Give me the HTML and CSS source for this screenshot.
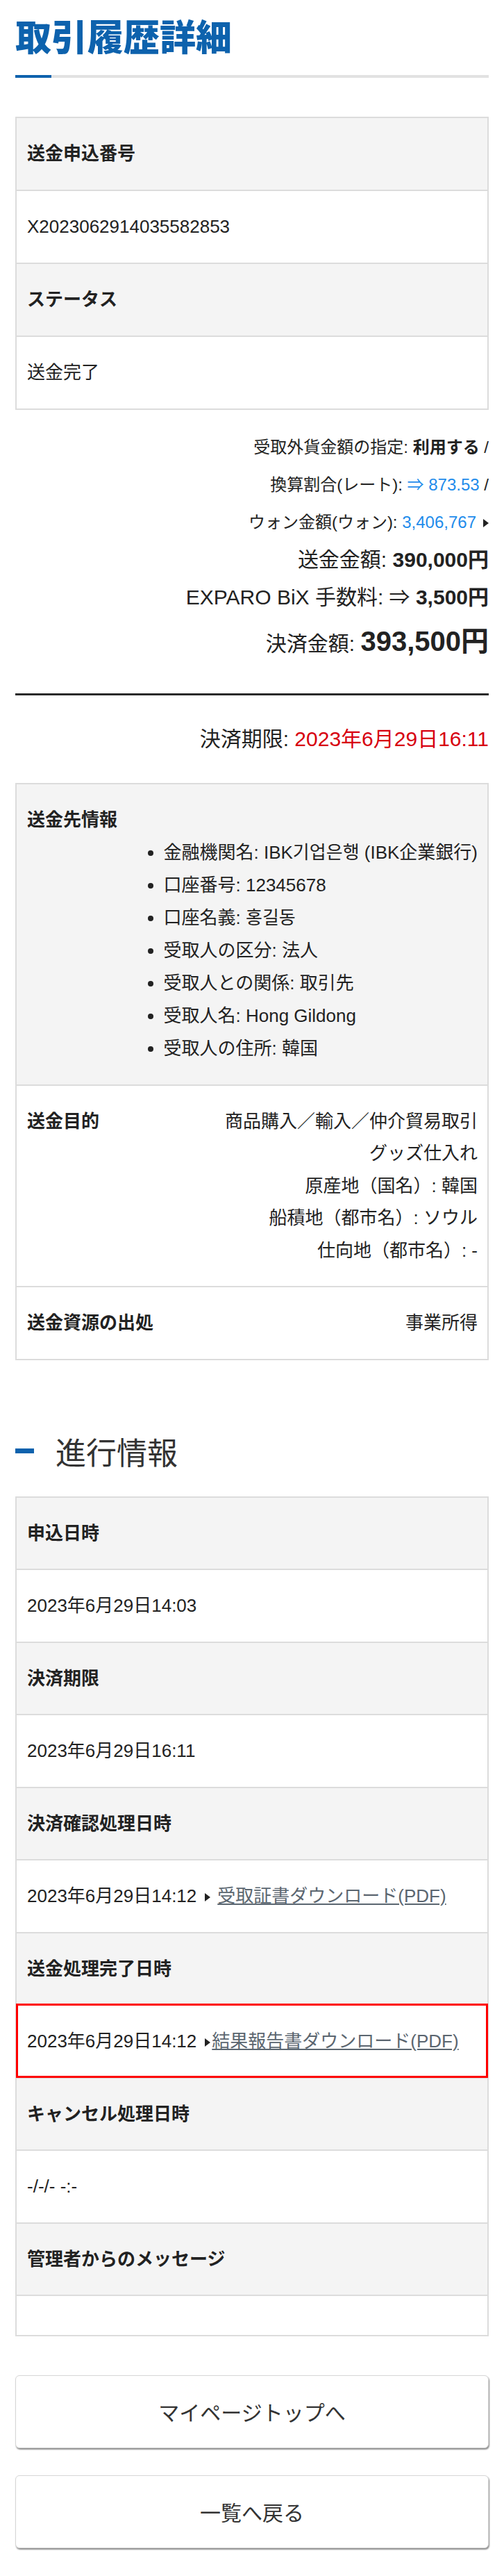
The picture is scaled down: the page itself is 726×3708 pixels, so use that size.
FILE: index.html
```html
<!DOCTYPE html>
<html lang="ja">
<head>
<meta charset="utf-8">
<title>取引履歴詳細</title>
<link rel="stylesheet" href="styles.css">
</head>
<body>
<main class="page">
  <h1 class="title">取引履歴詳細</h1>
  <div class="title-rule"></div>

  <div class="tbl first">
    <div class="row head">送金申込番号</div>
    <div class="row">X2023062914035582853</div>
    <div class="row head">ステータス</div>
    <div class="row">送金完了</div>
  </div>

  <div class="amounts">
    <div class="amt-s">受取外貨金額の指定: <b>利用する</b> /</div>
    <div class="amt-s">換算割合(レート): <span class="blue">⇒ 873.53</span> /</div>
    <div class="amt-s">ウォン金額(ウォン): <span class="blue">3,406,767</span><span class="tri tri-amt"></span></div>
    <div class="amt-m">送金金額: <b>390,000円</b></div>
    <div class="amt-m">EXPARO BiX 手数料: ⇒ <b>3,500円</b></div>
    <div class="amt-l">決済金額: <b>393,500円</b></div>
  </div>

  <div class="black-rule"></div>

  <div class="deadline">決済期限: <span class="red">2023年6月29日16:11</span></div>

  <div class="tbl second">
    <div class="row head multi">
      <div class="label line">送金先情報</div>
      <ul class="dest">
        <li>金融機関名: IBK기업은행 (IBK企業銀行)</li>
        <li>口座番号: 12345678</li>
        <li>口座名義: 홍길동</li>
        <li>受取人の区分: 法人</li>
        <li>受取人との関係: 取引先</li>
        <li>受取人名: Hong Gildong</li>
        <li>受取人の住所: 韓国</li>
      </ul>
    </div>
    <div class="row split multi">
      <div class="label line">送金目的</div>
      <div class="val">
        <div class="line">商品購入／輸入／仲介貿易取引</div>
        <div class="line">グッズ仕入れ</div>
        <div class="line">原産地（国名）: 韓国</div>
        <div class="line">船積地（都市名）: ソウル</div>
        <div class="line">仕向地（都市名）: -</div>
      </div>
    </div>
    <div class="row split">
      <div class="label">送金資源の出処</div>
      <div class="val">事業所得</div>
    </div>
  </div>

  <h2 class="sec">進行情報</h2>

  <div class="tbl">
    <div class="row head">申込日時</div>
    <div class="row">2023年6月29日14:03</div>
    <div class="row head">決済期限</div>
    <div class="row">2023年6月29日16:11</div>
    <div class="row head">決済確認処理日時</div>
    <div class="row">2023年6月29日14:12<span class="tri tri-a"></span><a class="link" href="#">受取証書ダウンロード(PDF)</a></div>
    <div class="row head">送金処理完了日時</div>
    <div class="row hl">2023年6月29日14:12<span class="tri tri-b"></span><a class="link" href="#">結果報告書ダウンロード(PDF)</a></div>
    <div class="row head">キャンセル処理日時</div>
    <div class="row">-/-/- -:-</div>
    <div class="row head">管理者からのメッセージ</div>
    <div class="row empty"></div>
  </div>

  <div class="btns">
    <a class="btn" href="#">マイページトップへ</a>
    <a class="btn" href="#">一覧へ戻る</a>
  </div>
</main>
</body>
</html>
```
FILE: styles.css
```css
html, body {
  margin: 0;
  padding: 0;
  background: #fff;
}

body {
  font-family: "Liberation Sans", "Noto Sans CJK JP", "Noto Sans CJK KR", sans-serif;
  color: #222;
}

.page {
  padding: 20px 22px 41px;
}

.title {
  margin: 0;
  height: 62px;
  font-family: "Noto Sans CJK JP", sans-serif;
  font-size: 52px;
  line-height: 62px;
  font-weight: 900;
  color: #0d62ad;
}

.title-rule {
  margin-top: 26px;
  height: 4px;
  background: linear-gradient(to right, #0d62ad 52px, #e2e2e2 52px);
}

.tbl {
  border: 2px solid #dcdcdc;
}

.tbl.first {
  margin-top: 56px;
}

.tbl.second {
  margin-top: 36px;
}

.row {
  height: 46.5px;
  padding: 28px 14px 28px 15px;
  font-size: 26px;
  line-height: 46.5px;
  border-top: 2px solid #dcdcdc;
  background: #fff;
  white-space: nowrap;
}

.tbl.first .row {
  height: 47px;
  line-height: 47px;
}

.row.multi {
  height: auto;
}

.row:first-child {
  border-top: 0;
}

.head {
  background: #f4f4f4;
  font-weight: 700;
}

.label {
  font-weight: 700;
}

.line {
  height: 46.5px;
}

.dest {
  margin: 0 0 0 auto;
  width: fit-content;
  padding-left: 40px;
  font-weight: 400;
  list-style: disc;
}

.dest li {
  height: 47px;
  line-height: 47px;
}

.split {
  display: flex;
  justify-content: space-between;
  align-items: flex-start;
}

.split .val {
  text-align: right;
}

.amounts {
  margin-top: 27px;
  text-align: right;
}

.amt-s {
  height: 54px;
  font-size: 24px;
  line-height: 54px;
}

.amt-m {
  height: 54px;
  font-size: 30px;
  line-height: 54px;
}

.amt-l {
  height: 72px;
  font-size: 30px;
  line-height: 72px;
}

.amt-l b {
  font-size: 40px;
}

.blue {
  color: #1f8ceb;
}

.red {
  color: #d7000f;
}

.tri {
  display: inline-block;
  width: 0;
  height: 0;
  border-left: 8px solid #222;
  border-top: 6px solid transparent;
  border-bottom: 6px solid transparent;
  vertical-align: 1px;
}

.tri-amt {
  margin-left: 10px;
  border-top-width: 6.5px;
  border-bottom-width: 6.5px;
}

.tri-a {
  margin: 0 10px 0 12px;
}

.tri-b {
  margin: 0 2px 0 12px;
}

.link {
  color: #5b6670;
  text-decoration: underline;
}

.black-rule {
  margin-top: 39px;
  height: 3px;
  background: #2a2a2a;
}

.deadline {
  height: 54px;
  margin-top: 36px;
  font-size: 30px;
  line-height: 54px;
  text-align: right;
}

.sec {
  display: flex;
  align-items: center;
  height: 64px;
  margin: 99px 0 33px;
  font-family: "Noto Sans CJK JP", sans-serif;
  font-size: 44px;
  line-height: 64px;
  font-weight: 400;
  color: #333;
}

.sec::before {
  content: "";
  width: 27px;
  height: 7px;
  margin-right: 31px;
  background: #0d62ad;
}

.hl {
  position: relative;
  z-index: 1;
  outline: 3px solid #ff0000;
  outline-offset: -2px;
}

.empty {
  height: 0;
}

.btns {
  margin-top: 56px;
}

.btn {
  display: block;
  box-sizing: border-box;
  height: 105px;
  border: 1px solid #d6d6d6;
  border-radius: 6px;
  box-shadow: 1px 2px 2px rgba(0, 0, 0, 0.45);
  background: #fff;
  text-align: center;
  font-family: "Noto Sans CJK JP", sans-serif;
  font-size: 30px;
  line-height: 103px;
  color: #333;
  text-decoration: none;
}

.btn + .btn {
  margin-top: 39px;
}
```
